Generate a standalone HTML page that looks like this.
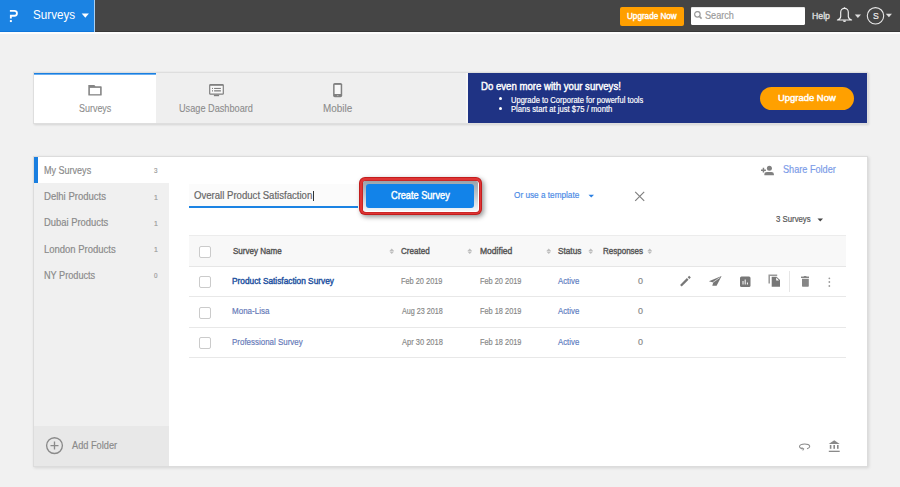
<!DOCTYPE html>
<html><head><meta charset="utf-8"><style>
html,body{margin:0;padding:0;}
body{width:900px;height:487px;overflow:hidden;background:#f1f1f1;position:relative;font-family:"Liberation Sans",sans-serif;}
.b{position:absolute;display:block;}
.t{position:absolute;white-space:nowrap;line-height:1;transform-origin:0 0;}
</style></head><body>
<div class="b" style="left:0px;top:0px;width:900px;height:32px;background:#454545"></div>
<div class="b" style="left:0px;top:0px;width:94px;height:32px;background:#1b83e3"></div>
<div class="b" style="left:94px;top:0px;width:1px;height:32px;background:#a9cff2"></div>
<div class="b" style="left:0px;top:31px;width:94px;height:1px;background:#0f76da"></div>
<div class="b" style="left:95px;top:31px;width:805px;height:1px;background:#383838"></div>
<div class="b" style="left:0px;top:32px;width:900px;height:2px;background:#fdfdfd"></div>
<svg class="b" style="left:9px;top:9px" width="11" height="14" viewBox="0 0 11 14"><path d="M0.9 1.8 H5.5 A2.45 2.45 0 0 1 5.5 6.7 H1.85 V9.6" fill="none" stroke="#fff" stroke-width="1.85"/><rect x="0.9" y="11.1" width="1.95" height="1.95" fill="#fff"/></svg>
<span class="t" style="left:32.78px;top:8.20px;font-size:13.00px;-webkit-text-stroke:0px #ffffff;color:#ffffff;transform:scaleX(0.896);">Surveys</span>
<svg class="b" style="left:81px;top:13px" width="9" height="6" viewBox="0 0 9 6"><path d="M0.7 0.5 H7.9 L4.3 4.8 Z" fill="#fff"/></svg>
<div class="b" style="left:620px;top:7px;width:64px;height:19px;background:#ff9f00;border-radius:2px"></div>
<span class="t" style="left:626.59px;top:11.98px;font-size:9.00px;-webkit-text-stroke:0.42px #ffffff;color:#ffffff;transform:scaleX(0.903);">Upgrade Now</span>
<div class="b" style="left:691px;top:7px;width:114px;height:18px;background:#fff;border-radius:1.5px;box-shadow:inset 0 1px 0 #e6e6e6"></div>
<svg class="b" style="left:694px;top:11px" width="9" height="9" viewBox="0 0 9 9"><circle cx="3.4" cy="3.3" r="2.75" fill="none" stroke="#9a9a9a" stroke-width="1.2"/><path d="M5.4 5.4 L7.6 7.6" stroke="#9a9a9a" stroke-width="1.5"/></svg>
<span class="t" style="left:704.59px;top:11.17px;font-size:10.20px;-webkit-text-stroke:0.18px #9a9a9a;color:#9a9a9a;transform:scaleX(0.897);">Search</span>
<span class="t" style="left:812.00px;top:11.27px;font-size:9.60px;-webkit-text-stroke:0.42px #dddddd;color:#dddddd;transform:scaleX(0.910);">Help</span>
<svg class="b" style="left:836px;top:7px" width="17" height="16" viewBox="0 0 17 16"><path d="M4.7 5.2 A3.8 3.8 0 0 1 12.3 5.2 V9.6 Q12.5 12 15.6 13 H1.4 Q4.5 12 4.7 9.6 Z" fill="none" stroke="#f0f0f0" stroke-width="1.15" stroke-linejoin="round"/><path d="M8.5 0.3 V1.6" stroke="#f0f0f0" stroke-width="1.3"/><path d="M7 13.6 A1.5 1.5 0 0 0 10 13.6 Z" fill="#f0f0f0"/></svg>
<svg class="b" style="left:854px;top:14px" width="8" height="5" viewBox="0 0 8 5"><path d="M0.8 0.6 H7 L3.9 4 Z" fill="#ddd"/></svg>
<svg class="b" style="left:866px;top:7px" width="19" height="18" viewBox="0 0 19 18"><circle cx="9.5" cy="8.8" r="8.2" fill="none" stroke="#e8e8e8" stroke-width="1.1"/></svg>
<span class="t" style="left:872.81px;top:12.19px;font-size:8.40px;-webkit-text-stroke:0.18px #eeeeee;color:#eeeeee;transform:scaleX(1.035);">S</span>
<svg class="b" style="left:885px;top:13px" width="8" height="5" viewBox="0 0 8 5"><path d="M0.8 0.8 H7 L3.9 4.2 Z" fill="#ddd"/></svg>
<div class="b" style="left:33px;top:72px;width:835px;height:52px;background:#efefef;box-shadow:1px 1px 2px rgba(0,0,0,0.12);border:1px solid #dedede;box-sizing:border-box"></div>
<div class="b" style="left:34px;top:73px;width:122px;height:50px;background:#ffffff"></div>
<div class="b" style="left:34px;top:73px;width:122px;height:1px;background:#1a7fe0"></div>
<div class="b" style="left:34px;top:74px;width:122px;height:1px;background:#6aaef0"></div>
<div class="b" style="left:33px;top:71px;width:835px;height:1px;background:#ebebeb"></div>
<div class="b" style="left:466px;top:73px;width:2px;height:50px;background:#f7f7f7"></div>
<div class="b" style="left:468px;top:73px;width:399px;height:50px;background:#1f3384"></div>
<svg class="b" style="left:87px;top:84px" width="16" height="13" viewBox="0 0 16 13"><path d="M1.3 1.1 H7.3 L8.5 2.3 H14 Q14.7 2.3 14.7 3 V10.9 Q14.7 11.6 14 11.6 H2 Q1.3 11.6 1.3 10.9 Z" fill="#858585"/><rect x="2.9" y="3.9" width="10.2" height="6.3" fill="#fff"/></svg>
<span class="t" style="left:79.00px;top:103.70px;font-size:10.40px;-webkit-text-stroke:0.1px #8c8c8c;color:#8c8c8c;transform:scaleX(0.861);">Surveys</span>
<svg class="b" style="left:208px;top:83px" width="17" height="14" viewBox="0 0 17 14"><rect x="1.1" y="1.1" width="14.8" height="10.6" rx="1.3" fill="#808080"/><rect x="2.3" y="2.8" width="12.4" height="7.7" fill="#f8f8f8"/><rect x="4" y="4.9" width="1" height="1.1" fill="#808080"/><rect x="6.1" y="4.9" width="6.8" height="1.1" fill="#808080"/><rect x="4" y="7.2" width="1" height="1.3" fill="#808080"/><rect x="6.1" y="7.2" width="6.8" height="1.3" fill="#808080"/><rect x="5.9" y="11.7" width="5.2" height="1.5" fill="#808080"/></svg>
<span class="t" style="left:179.31px;top:103.70px;font-size:10.40px;-webkit-text-stroke:0.1px #8c8c8c;color:#8c8c8c;transform:scaleX(0.882);">Usage Dashboard</span>
<svg class="b" style="left:332px;top:82px" width="12" height="16" viewBox="0 0 12 16"><rect x="1.1" y="0.9" width="9.1" height="14.4" rx="1.7" fill="#808080"/><rect x="2.6" y="2.9" width="6.1" height="9.1" fill="#f8f8f8"/><rect x="4.9" y="13.1" width="1.6" height="1" fill="#b0b0b0"/></svg>
<span class="t" style="left:323.01px;top:103.70px;font-size:10.40px;-webkit-text-stroke:0.1px #8c8c8c;color:#8c8c8c;transform:scaleX(0.953);">Mobile</span>
<span class="t" style="left:480.83px;top:82.17px;font-size:10.20px;-webkit-text-stroke:0.42px #ffffff;color:#ffffff;transform:scaleX(0.943);">Do even more with your surveys!</span>
<div class="b" style="left:499px;top:97px;width:3px;height:3px;background:#fff;border-radius:50%"></div>
<div class="b" style="left:499px;top:107px;width:3px;height:3px;background:#fff;border-radius:50%"></div>
<span class="t" style="left:511.03px;top:96.56px;font-size:8.20px;-webkit-text-stroke:0.18px #ffffff;color:#ffffff;transform:scaleX(0.920);">Upgrade to Corporate for powerful tools</span>
<span class="t" style="left:510.99px;top:105.96px;font-size:8.20px;-webkit-text-stroke:0.18px #ffffff;color:#ffffff;transform:scaleX(0.935);">Plans start at just $75 / month</span>
<div class="b" style="left:760px;top:87px;width:94px;height:23px;background:#ffa000;border-radius:12px"></div>
<span class="t" style="left:777.59px;top:94.08px;font-size:9.00px;-webkit-text-stroke:0.42px #ffffff;color:#ffffff;transform:scaleX(1.049);">Upgrade Now</span>
<div class="b" style="left:33px;top:156px;width:835px;height:311px;background:#fff;border:1px solid #dcdcdc;box-sizing:border-box;box-shadow:1px 1px 3px rgba(0,0,0,0.12)"></div>
<div class="b" style="left:34px;top:157px;width:135px;height:269px;background:#f0f0f0"></div>
<div class="b" style="left:34px;top:426px;width:135px;height:40px;background:#e8e8e8"></div>
<div class="b" style="left:34px;top:157px;width:135px;height:26px;background:#ffffff"></div>
<div class="b" style="left:34px;top:157px;width:4px;height:26px;background:#1a7fe0"></div>
<span class="t" style="left:44.08px;top:165.87px;font-size:10.20px;-webkit-text-stroke:0.18px #8a8a8a;color:#8a8a8a;transform:scaleX(0.886);">My Surveys</span>
<span class="t" style="left:154.38px;top:167.13px;font-size:8.00px;-webkit-text-stroke:0.18px #999999;color:#999999;transform:scaleX(0.781);">3</span>
<span class="t" style="left:44.04px;top:192.27px;font-size:10.20px;-webkit-text-stroke:0.18px #8a8a8a;color:#8a8a8a;transform:scaleX(0.936);">Delhi Products</span>
<span class="t" style="left:154.08px;top:193.53px;font-size:8.00px;-webkit-text-stroke:0.18px #999999;color:#999999;transform:scaleX(0.862);">1</span>
<span class="t" style="left:44.05px;top:218.27px;font-size:10.20px;-webkit-text-stroke:0.18px #8a8a8a;color:#8a8a8a;transform:scaleX(0.923);">Dubai Products</span>
<span class="t" style="left:154.08px;top:219.53px;font-size:8.00px;-webkit-text-stroke:0.18px #999999;color:#999999;transform:scaleX(0.862);">1</span>
<span class="t" style="left:44.04px;top:244.57px;font-size:10.20px;-webkit-text-stroke:0.18px #8a8a8a;color:#8a8a8a;transform:scaleX(0.931);">London Products</span>
<span class="t" style="left:154.08px;top:245.83px;font-size:8.00px;-webkit-text-stroke:0.18px #999999;color:#999999;transform:scaleX(0.862);">1</span>
<span class="t" style="left:44.07px;top:270.87px;font-size:10.20px;-webkit-text-stroke:0.18px #8a8a8a;color:#8a8a8a;transform:scaleX(0.898);">NY Products</span>
<span class="t" style="left:154.35px;top:272.13px;font-size:8.00px;-webkit-text-stroke:0.18px #999999;color:#999999;transform:scaleX(0.781);">0</span>
<svg class="b" style="left:45px;top:436px" width="19" height="19" viewBox="0 0 19 19"><circle cx="9.5" cy="9.6" r="7.9" fill="none" stroke="#8a8a8a" stroke-width="1.35"/><path d="M9.5 5.6 V13.6 M5.5 9.6 H13.5" stroke="#8a8a8a" stroke-width="1.35"/></svg>
<span class="t" style="left:71.60px;top:440.90px;font-size:10.40px;-webkit-text-stroke:0.18px #8a8a8a;color:#8a8a8a;transform:scaleX(0.887);">Add Folder</span>
<svg class="b" style="left:760px;top:165px" width="15" height="11" viewBox="0 0 15 11"><circle cx="9.4" cy="3.2" r="2.5" fill="#808080"/><path d="M4.4 10.3 V9.2 Q4.4 6.9 7 6.9 H11.4 Q13.9 6.9 13.9 9.2 V10.3 Z" fill="#808080"/><path d="M1 5.2 H5.9 M3.45 2.8 V7.6" stroke="#808080" stroke-width="1.5"/></svg>
<span class="t" style="left:783.49px;top:164.97px;font-size:10.20px;-webkit-text-stroke:0.18px #7b9be8;color:#7b9be8;transform:scaleX(0.897);">Share Folder</span>
<div class="b" style="left:189px;top:184px;width:169px;height:22px;background:#fbfbfb"></div>
<div class="b" style="left:189px;top:206px;width:169px;height:2px;background:#1b83e3"></div>
<span class="t" style="left:194.17px;top:191.17px;font-size:10.20px;-webkit-text-stroke:0.18px #666666;color:#666666;transform:scaleX(0.941);">Overall Product Satisfaction</span>
<div class="b" style="left:313px;top:191px;width:1px;height:10px;background:#333"></div>
<div class="b" style="left:359px;top:177px;width:123px;height:38px;background:#c21d1d;border-radius:6px;box-shadow:2px 2px 5px rgba(0,0,0,0.42)"></div>
<div class="b" style="left:360px;top:178px;width:121px;height:36px;background:#e03535;border-radius:5px"></div>
<div class="b" style="left:362.5px;top:180.5px;width:116.0px;height:31.0px;background:#fff;border-radius:3px;box-shadow:0 0 0 0.6px #b51c1c"></div>
<div class="b" style="left:363px;top:181px;width:115px;height:30px;background:linear-gradient(#9aa2aa,#bfc6cc 45%,#f3f7fb);border-radius:2px"></div>
<div class="b" style="left:366px;top:184px;width:108px;height:24px;background:#1283e9;border-radius:3px"></div>
<span class="t" style="left:390.74px;top:191.27px;font-size:10.20px;-webkit-text-stroke:0.42px #ffffff;color:#ffffff;transform:scaleX(0.902);">Create Survey</span>
<span class="t" style="left:514.13px;top:190.14px;font-size:9.40px;-webkit-text-stroke:0.18px #4a8ae6;color:#4a8ae6;transform:scaleX(0.876);">Or use a template</span>
<svg class="b" style="left:588px;top:194px" width="7" height="5" viewBox="0 0 7 5"><path d="M0.5 0.8 H6 L3.25 3.6 Z" fill="#2a7fe2"/></svg>
<svg class="b" style="left:634px;top:191px" width="12" height="11" viewBox="0 0 12 11"><path d="M1.2 0.9 L10.2 9.9 M10.2 0.9 L1.2 9.9" stroke="#808080" stroke-width="1.2"/></svg>
<span class="t" style="left:775.93px;top:214.89px;font-size:8.40px;-webkit-text-stroke:0.18px #555555;color:#555555;transform:scaleX(0.931);">3 Surveys</span>
<svg class="b" style="left:817px;top:218px" width="7" height="5" viewBox="0 0 7 5"><path d="M0.5 0.6 H6 L3.25 3.6 Z" fill="#444"/></svg>
<div class="b" style="left:189px;top:235px;width:657px;height:32px;background:#f8f8f8;border-top:1px solid #ececec;border-bottom:1px solid #e6e6e6;box-sizing:border-box"></div>
<div class="b" style="left:199px;top:245.5px;width:12px;height:12.0px;border:1px solid #cbcbcb;border-radius:2px;box-sizing:border-box;background:#fff"></div>
<span class="t" style="left:232.64px;top:246.47px;font-size:9.60px;-webkit-text-stroke:0.42px #555555;color:#555555;transform:scaleX(0.838);">Survey Name</span>
<svg class="b" style="left:388.5px;top:247.5px" width="6" height="7" viewBox="0 0 6 7"><path d="M0.4 2.9 L2.75 0.4 L5.1 2.9Z M0.4 3.5 L2.75 6 L5.1 3.5Z" fill="#bdbdbd"/></svg>
<span class="t" style="left:401.40px;top:246.47px;font-size:9.60px;-webkit-text-stroke:0.42px #555555;color:#555555;transform:scaleX(0.838);">Created</span>
<svg class="b" style="left:467px;top:247.5px" width="6" height="7" viewBox="0 0 6 7"><path d="M0.4 2.9 L2.75 0.4 L5.1 2.9Z M0.4 3.5 L2.75 6 L5.1 3.5Z" fill="#bdbdbd"/></svg>
<span class="t" style="left:479.52px;top:246.47px;font-size:9.60px;-webkit-text-stroke:0.42px #555555;color:#555555;transform:scaleX(0.890);">Modified</span>
<svg class="b" style="left:545.5px;top:247.5px" width="6" height="7" viewBox="0 0 6 7"><path d="M0.4 2.9 L2.75 0.4 L5.1 2.9Z M0.4 3.5 L2.75 6 L5.1 3.5Z" fill="#bdbdbd"/></svg>
<span class="t" style="left:557.63px;top:246.47px;font-size:9.60px;-webkit-text-stroke:0.42px #555555;color:#555555;transform:scaleX(0.858);">Status</span>
<svg class="b" style="left:588px;top:247.5px" width="6" height="7" viewBox="0 0 6 7"><path d="M0.4 2.9 L2.75 0.4 L5.1 2.9Z M0.4 3.5 L2.75 6 L5.1 3.5Z" fill="#bdbdbd"/></svg>
<span class="t" style="left:602.76px;top:246.47px;font-size:9.60px;-webkit-text-stroke:0.42px #555555;color:#555555;transform:scaleX(0.835);">Responses</span>
<svg class="b" style="left:646.5px;top:247.5px" width="6" height="7" viewBox="0 0 6 7"><path d="M0.4 2.9 L2.75 0.4 L5.1 2.9Z M0.4 3.5 L2.75 6 L5.1 3.5Z" fill="#bdbdbd"/></svg>
<div class="b" style="left:199px;top:276px;width:12px;height:12px;border:1px solid #cbcbcb;border-radius:2px;box-sizing:border-box;background:#fff"></div>
<span class="t" style="left:232.34px;top:276.98px;font-size:9.00px;-webkit-text-stroke:0.42px #2251a0;color:#2251a0;transform:scaleX(0.922);">Product Satisfaction Survey</span>
<span class="t" style="left:401.21px;top:276.98px;font-size:9.00px;-webkit-text-stroke:0.18px #888888;color:#888888;transform:scaleX(0.820);">Feb 20 2019</span>
<span class="t" style="left:479.61px;top:276.98px;font-size:9.00px;-webkit-text-stroke:0.18px #888888;color:#888888;transform:scaleX(0.820);">Feb 20 2019</span>
<span class="t" style="left:558.00px;top:276.98px;font-size:9.00px;-webkit-text-stroke:0.18px #5c7cbf;color:#5c7cbf;transform:scaleX(0.867);">Active</span>
<span class="t" style="left:637.94px;top:276.98px;font-size:9.00px;-webkit-text-stroke:0.18px #888888;color:#888888;transform:scaleX(0.995);">0</span>
<div class="b" style="left:189px;top:296px;width:657px;height:1px;background:#e8e8e8"></div>
<div class="b" style="left:199px;top:306.5px;width:12px;height:12.0px;border:1px solid #cbcbcb;border-radius:2px;box-sizing:border-box;background:#fff"></div>
<span class="t" style="left:232.36px;top:306.78px;font-size:9.00px;-webkit-text-stroke:0.18px #6579b8;color:#6579b8;transform:scaleX(0.891);">Mona-Lisa</span>
<span class="t" style="left:401.80px;top:306.78px;font-size:9.00px;-webkit-text-stroke:0.18px #888888;color:#888888;transform:scaleX(0.799);">Aug 23 2018</span>
<span class="t" style="left:479.61px;top:306.78px;font-size:9.00px;-webkit-text-stroke:0.18px #888888;color:#888888;transform:scaleX(0.820);">Feb 18 2019</span>
<span class="t" style="left:558.00px;top:306.78px;font-size:9.00px;-webkit-text-stroke:0.18px #5c7cbf;color:#5c7cbf;transform:scaleX(0.867);">Active</span>
<span class="t" style="left:637.94px;top:306.78px;font-size:9.00px;-webkit-text-stroke:0.18px #888888;color:#888888;transform:scaleX(0.995);">0</span>
<div class="b" style="left:189px;top:327px;width:657px;height:1px;background:#e8e8e8"></div>
<div class="b" style="left:199px;top:337px;width:12px;height:12px;border:1px solid #cbcbcb;border-radius:2px;box-sizing:border-box;background:#fff"></div>
<span class="t" style="left:232.36px;top:337.98px;font-size:9.00px;-webkit-text-stroke:0.18px #6579b8;color:#6579b8;transform:scaleX(0.884);">Professional Survey</span>
<span class="t" style="left:401.80px;top:337.98px;font-size:9.00px;-webkit-text-stroke:0.18px #888888;color:#888888;transform:scaleX(0.832);">Apr 30 2018</span>
<span class="t" style="left:479.61px;top:337.98px;font-size:9.00px;-webkit-text-stroke:0.18px #888888;color:#888888;transform:scaleX(0.820);">Feb 18 2019</span>
<span class="t" style="left:558.00px;top:337.98px;font-size:9.00px;-webkit-text-stroke:0.18px #5c7cbf;color:#5c7cbf;transform:scaleX(0.867);">Active</span>
<span class="t" style="left:637.94px;top:337.98px;font-size:9.00px;-webkit-text-stroke:0.18px #888888;color:#888888;transform:scaleX(0.995);">0</span>
<div class="b" style="left:189px;top:357px;width:657px;height:1px;background:#e8e8e8"></div>
<svg class="b" style="left:679px;top:275px" width="13" height="13" viewBox="0 0 13 13"><path d="M1.9 10.7 L8.7 3.9" stroke="#777777" stroke-width="2.3"/><path d="M9.5 3.1 L11 1.6" stroke="#777777" stroke-width="2.3"/></svg>
<svg class="b" style="left:708px;top:275px" width="15" height="12" viewBox="0 0 15 12"><path d="M0.9 6.3 L13.6 1.1 L8.6 10.7 L4.3 10.7 L5.2 7.6 Z" fill="#777777"/><path d="M4.8 7.5 L11.8 2.6" stroke="#fff" stroke-width="0.65"/></svg>
<svg class="b" style="left:739px;top:275px" width="13" height="13" viewBox="0 0 13 13"><rect x="1" y="1.5" width="10.5" height="10.5" rx="1.5" fill="#777777"/><path d="M4 9.5 V6 M6.2 9.5 V4.5 M8.4 9.5 V7.5" stroke="#fff" stroke-width="1"/></svg>
<svg class="b" style="left:768px;top:274px" width="14" height="14" viewBox="0 0 14 14"><path d="M1.2 9.4 V1.2 H9.2" fill="none" stroke="#999" stroke-width="1.5"/><path d="M3.7 2.7 H8.6 L12 6.1 V12.8 H3.7 Z" fill="#777777"/><path d="M8.2 3.6 L11 6.4 H8.2 Z" fill="#fff"/></svg>
<div class="b" style="left:789px;top:271px;width:1px;height:21px;background:#e6e6e6"></div>
<svg class="b" style="left:800px;top:275px" width="11" height="13" viewBox="0 0 11 13"><rect x="1" y="1.6" width="8" height="1.3" fill="#777777"/><rect x="3.8" y="1" width="2.6" height="0.8" fill="#777777"/><path d="M2 3.8 H8.8 V11.2 L8.2 11.8 H2.6 L2 11.2 Z" fill="#868686"/></svg>
<svg class="b" style="left:827px;top:276px" width="5" height="12" viewBox="0 0 5 12"><circle cx="2.35" cy="2.3" r="0.9" fill="#9a9a9a"/><circle cx="2.35" cy="6" r="0.9" fill="#9a9a9a"/><circle cx="2.35" cy="10" r="0.9" fill="#9a9a9a"/></svg>
<svg class="b" style="left:798px;top:442px" width="14" height="10" viewBox="0 0 14 10"><path d="M4.2 6.9 C0.2 5.9 0.4 1.9 6.6 1.9 C12.6 1.9 13.2 5.6 9 6.7" fill="none" stroke="#8a8a8a" stroke-width="1.05"/><path d="M3.6 5.6 L5.6 7 L4.6 8.4" fill="none" stroke="#8a8a8a" stroke-width="1.05"/></svg>
<svg class="b" style="left:828px;top:439px" width="13" height="14" viewBox="0 0 13 14"><path d="M0.7 4.9 L6.2 1.2 L11.7 4.9 Z" fill="#8a8a8a"/><rect x="1.8" y="6" width="1.6" height="3.8" fill="#8a8a8a"/><rect x="5.4" y="6" width="1.6" height="3.8" fill="#8a8a8a"/><rect x="9" y="6" width="1.6" height="3.8" fill="#8a8a8a"/><rect x="0.8" y="11.7" width="10.9" height="1.3" fill="#8a8a8a"/></svg>
</body></html>
